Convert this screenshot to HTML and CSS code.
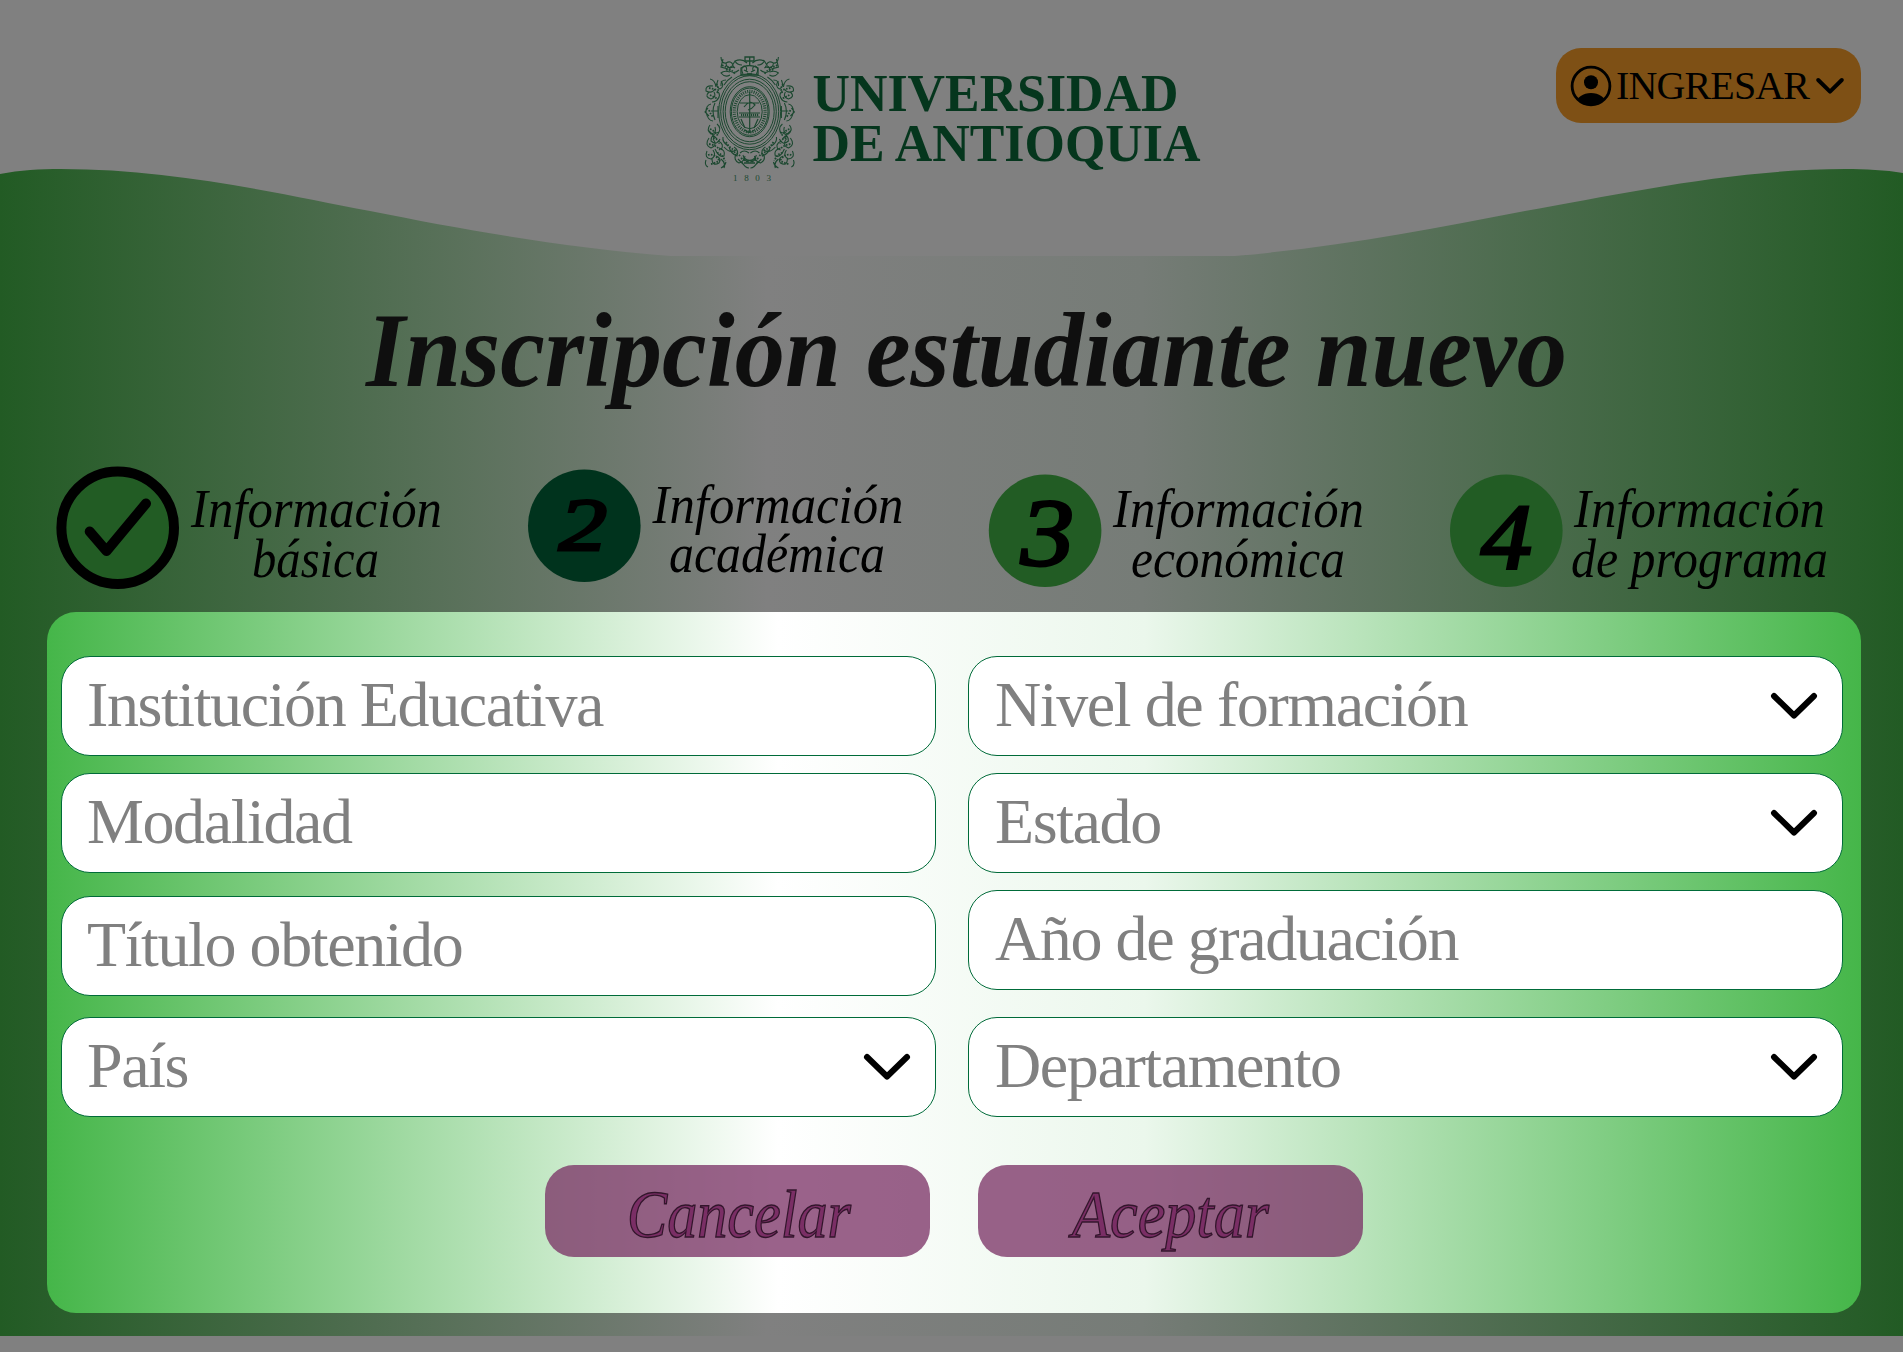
FILE: index.html
```html
<!DOCTYPE html>
<html lang="es">
<head>
<meta charset="utf-8">
<title>Inscripción estudiante nuevo</title>
<link rel="stylesheet" href="styles.css">
</head>
<body>
<div class="page">
  <header class="header">
    <svg class="wave" viewBox="0 0 1903 256"><path d="M0 0H1903V173C1885 170 1866 169 1845 169C1735 169 1620 194 1525 211C1430 229 1340 247 1235 256H670C560 247 460 229 370 211C280 194 175 169 61 169C40 169 20 170 0 174Z"/></svg>
    <div class="brand">
      <svg class="seal" viewBox="0 0 104 136">
        <g fill="none" stroke="#1c4830">
          <g stroke-width="1">
            <ellipse cx="51.7" cy="61.7" rx="31" ry="38"/><ellipse cx="51.7" cy="61.7" rx="29" ry="36"/><ellipse cx="51.7" cy="61.7" rx="26.6" ry="32.5"/><ellipse cx="51.7" cy="61.7" rx="24.5" ry="30"/><ellipse cx="51.7" cy="61.7" rx="19.5" ry="25"/><ellipse cx="51.7" cy="61.7" rx="18.3" ry="23.6"/>
            <ellipse cx="51.7" cy="61.7" rx="12.5" ry="17"/>
          </g>
          <ellipse cx="51.7" cy="61.7" rx="15.4" ry="20.3" stroke-width="3.2" stroke-dasharray="1 1.2"/>
          <path d="M51.7 42V83M42 53H61M41 63H62M41 67H62M43 69l4 9M60 69l-4 9M46 57q6-8 11-2q-3 4-7 5M47 80q5 5 9 0" stroke-width="1.2"/>
          <path d="M43 65H61" stroke-width="2.4" stroke-dasharray="1.2 .8"/>
          <path id="flora" stroke-width="1.1" d="M45 24q-3-6 1-8q4 1 2 5M44 15q-5 0-7-4q7-3 12 2M41 20q-6 5-10 0q2-5 6-2M35 17q-7 2-7-4q5-3 7 2M29 13q-6 1-6-6M25 9l-2 8l7 2M32 22q-6-2-9 1q4 5 9 2M37 11l-3 5M34 27q-5 3-8 8M28 30q-6 0-5 6M20 30q-3 7 2 9q5-3 1-8M12 29q5 1 6 8M15 36q-8-1-7 5q6 3 9-2M11 42q-5 5 2 7q6-2 3-7M19 41q5 4 0 9M21 47q-2 5-7 5M13 54q-5 1-5 8q2 9 7 9M10 58l-3 4l4 4M17 53q-4 8 0 17M20 56v12M13 61h7M12 75q-4 5 1 9q6-1 4-7M19 74q5 4 1 10M10 80l9 9M21 82q-8 2-8 9q6 5 9-2M11 88q-5 7 2 10q7-3 2-9M20 91q7 3 3 9M25 87q-1 5 5 9M9 101q-3 7 4 8q6-3 2-9M17 99q4 9 9 7q2-6-5-8M8 110q-2 5 2 7M14 108q0 9 7 5q3-5-3-7M23 109q5 4 3 9M23 118q4-2 5-6M26 97q6 7 12 3M31 97q2 7 8 9q2-6-3-9M38 104q-3 6 3 9q7-2 4-8M42 103q4-4 9 0M44 112q3 6 7 6M40 109l5 5M47 106q-2 5 4 6"/>
          <path id="leaves" stroke-width="1.8" stroke-dasharray="1.6 1.3" d="M24 15q6 4 12 1M28 20q5-2 9 4M18 34q4 4 1 9M11 38l9 2M12 45l8 4M11 60q2 5 4 7M12 79q5 2 8 7M15 88q6 1 6 6M11 94q7 1 11 6M10 105q6-2 11 5M13 114q5-1 9-4M19 103q5 0 8 8M33 101q7 2 10 6M43 108q4 3 8 4M28 92q3 6 9 8"/>
          <use href="#flora" transform="translate(103.4) scale(-1 1)"/>
          <use href="#leaves" transform="translate(103.4) scale(-1 1)"/>
          <path d="M43 18q8-5 17 0v7H43zM47 7h9v4h-9zM51.7 7v8M46 20l4 2M57 20l-4 2M49 24h5M46 108q6 5 11 0M46 113h11" stroke-width="1.3"/>
        </g>
        <text class="year" x="35" y="130.5" textLength="38">1803</text>
      </svg>
      <svg class="wordmark" viewBox="808 66 400 110"><text x="812.5" y="110.5" textLength="366" lengthAdjust="spacingAndGlyphs">UNIVERSIDAD</text><text x="812.5" y="160.5" textLength="388" lengthAdjust="spacingAndGlyphs">DE ANTIOQUIA</text></svg>
    </div>
    <div class="login">
      <svg class="avatar" viewBox="0 0 42 42"><defs><clipPath id="disc"><circle cx="21" cy="21" r="19"/></clipPath></defs><circle cx="21" cy="21" r="18.9" fill="none" stroke="#000" stroke-width="2.8"/><circle cx="21" cy="17.3" r="7"/><ellipse cx="21" cy="38" rx="14.5" ry="10" clip-path="url(#disc)"/></svg>
      <svg class="login-text" viewBox="1616 66 198 40"><text x="1616" y="98.7" textLength="194">INGRESAR</text></svg>
      <svg class="login-arrow" viewBox="0 0 28 16"><path d="M2.2 2L14 13.6L25.8 2"/></svg>
    </div>
  </header>

  <svg class="title" viewBox="340 290 1250 130"><text x="366" y="386" textLength="1201" lengthAdjust="spacingAndGlyphs">Inscripción estudiante nuevo</text></svg>

  <div class="steps">
    <svg viewBox="47 460 473 140"><circle cx="117.7" cy="527.7" r="56.3" fill="#225c24" stroke="#000" stroke-width="10"/><path d="M89.7 531.5L106.5 551L146 503.5" fill="none" stroke="#000" stroke-width="10" stroke-linecap="round" stroke-linejoin="round"/><text x="191" y="527" textLength="251" lengthAdjust="spacingAndGlyphs">Información</text><text x="252" y="577" textLength="127" lengthAdjust="spacingAndGlyphs">básica</text></svg>
    <svg viewBox="520 460 460 140"><circle cx="584.3" cy="525.8" r="56.3" fill="#00331d"/><text class="digit" x="559" y="550" font-size="75" textLength="48" lengthAdjust="spacingAndGlyphs">2</text><text x="652.5" y="522.5" textLength="251" lengthAdjust="spacingAndGlyphs">Información</text><text x="669" y="572" textLength="216" lengthAdjust="spacingAndGlyphs">académica</text></svg>
    <svg viewBox="980 460 462 140"><circle cx="1045.1" cy="530.8" r="56.3" fill="#225c24"/><text class="digit" x="1021" y="565" font-size="95" textLength="53" lengthAdjust="spacingAndGlyphs">3</text><text x="1113" y="527" textLength="251" lengthAdjust="spacingAndGlyphs">Información</text><text x="1131" y="577" textLength="214" lengthAdjust="spacingAndGlyphs">económica</text></svg>
    <svg viewBox="1442 460 419 140"><circle cx="1506.3" cy="530.8" r="56.3" fill="#225c24"/><text class="digit" x="1481" y="568" font-size="94" textLength="51" lengthAdjust="spacingAndGlyphs">4</text><text x="1574" y="527" textLength="251" lengthAdjust="spacingAndGlyphs">Información</text><text x="1571" y="577" textLength="257" lengthAdjust="spacingAndGlyphs">de programa</text></svg>
  </div>

  <main class="panel">
    <div class="fields">
      <div class="column left">
        <div class="field"><span>Institución Educativa</span></div>
        <div class="field"><span>Modalidad</span></div>
        <div class="field"><span>Título obtenido</span></div>
        <div class="field"><span>País</span><svg class="arrow" viewBox="0 0 46 26"><path d="M3 3L23 22.5L43 3"/></svg></div>
      </div>
      <div class="column right">
        <div class="field"><span>Nivel de formación</span><svg class="arrow" viewBox="0 0 46 26"><path d="M3 3L23 22.5L43 3"/></svg></div>
        <div class="field"><span>Estado</span><svg class="arrow" viewBox="0 0 46 26"><path d="M3 3L23 22.5L43 3"/></svg></div>
        <div class="field"><span>Año de graduación</span></div>
        <div class="field"><span>Departamento</span><svg class="arrow" viewBox="0 0 46 26"><path d="M3 3L23 22.5L43 3"/></svg></div>
      </div>
    </div>
    <div class="actions">
      <div class="button"><svg viewBox="545 1165 385 92"><text x="627" y="1237" textLength="224" lengthAdjust="spacingAndGlyphs">Cancelar</text></svg></div>
      <div class="button"><svg viewBox="978 1165 385 92"><text x="1072" y="1237" textLength="197" lengthAdjust="spacingAndGlyphs">Aceptar</text></svg></div>
    </div>
  </main>
</div>
</body>
</html>
```
FILE: styles.css
```css
* { box-sizing: border-box; }
body {
  margin: 0;
  background: #808080;
  font-family: "Liberation Serif", "Times New Roman", serif;
}
svg { display: block; overflow: visible; }
.page {
  width: 1903px;
  height: 1336px;
  background: linear-gradient(90deg, #225b24 0%, #808080 40.3%, #767c77 60%, #225b24 100%);
}
.header {
  position: relative;
  height: 256px;
  display: flex;
  align-items: flex-start;
  justify-content: space-between;
  padding: 48px 42px 0 698px;
}
.wave {
  position: absolute;
  left: 0;
  top: 0;
  width: 1903px;
  height: 256px;
  fill: #808080;
}
.brand { position: relative; display: flex; padding-top: 2px; }
.seal { width: 104px; height: 136px; }
.year { font-size: 9px; fill: #1c4830; }
.wordmark {
  width: 400px;
  height: 110px;
  margin: 16px 0 0 6px;
  font-size: 53px;
  font-weight: bold;
  fill: #05361d;
}
.login {
  position: relative;
  display: flex;
  align-items: center;
  width: 305px;
  height: 75px;
  padding-left: 14px;
  border-radius: 25px;
  background: #7e5015;
}
.avatar { width: 42px; height: 42px; }
.login-text { width: 198px; height: 40px; margin-left: 4px; font-size: 40px; }
.login-arrow { width: 28px; height: 16px; margin-left: 2px; }
.login-arrow path {
  fill: none;
  stroke: #000;
  stroke-width: 4;
  stroke-linecap: round;
  stroke-linejoin: round;
}
.title {
  width: 1250px;
  height: 130px;
  margin: 34px 0 0 340px;
  font-size: 105px;
  font-weight: bold;
  font-style: italic;
  fill: #0f0f0f;
}
.steps {
  display: grid;
  grid-template-columns: 473px 460px 462px 419px;
  height: 140px;
  margin: 40px 0 12px 47px;
  font-size: 54px;
  font-style: italic;
}
.steps svg { width: 100%; height: 140px; }
.digit { stroke: #000; stroke-width: 3; }
.panel {
  width: 1814px;
  height: 701px;
  margin-left: 47px;
  padding: 44px 18px 0 14px;
  border-radius: 29px;
  background: linear-gradient(90deg, #45b649 0%, #fff 40.3%, #ebf7ec 60.5%, #45b649 100%);
}
.fields { display: flex; gap: 32px; height: 461px; }
.column { display: flex; flex-direction: column; width: 875px; gap: 17px; }
.left .field:nth-child(3) { margin-top: 6px; }
.left .field:nth-child(4) { margin-top: 4px; }
.right .field:nth-child(4) { margin-top: 10px; }
.field {
  display: flex;
  align-items: center;
  justify-content: space-between;
  flex: none;
  height: 100px;
  padding: 0 25px;
  border: 1px solid #006b39;
  border-radius: 29px;
  background: #fff;
  color: #808080;
  font-size: 64px;
  letter-spacing: -0.022em;
}
.right .field { padding-left: 26px; }
.field span { line-height: 96px; padding-bottom: 2px; white-space: nowrap; }
.arrow { width: 46px; height: 26px; }
.arrow path {
  fill: none;
  stroke: #000;
  stroke-width: 6;
  stroke-linecap: round;
  stroke-linejoin: round;
}
.actions { display: flex; gap: 48px; margin: 48px 0 0 484px; }
.button {
  width: 385px;
  height: 92px;
  border-radius: 29px;
  background: rgba(120, 46, 99, .75);
}
.button svg {
  width: 385px;
  height: 92px;
  font-size: 68px;
  font-style: italic;
  fill: #7a2e65;
  stroke: #32152b;
  stroke-width: 1.4;
}
```
